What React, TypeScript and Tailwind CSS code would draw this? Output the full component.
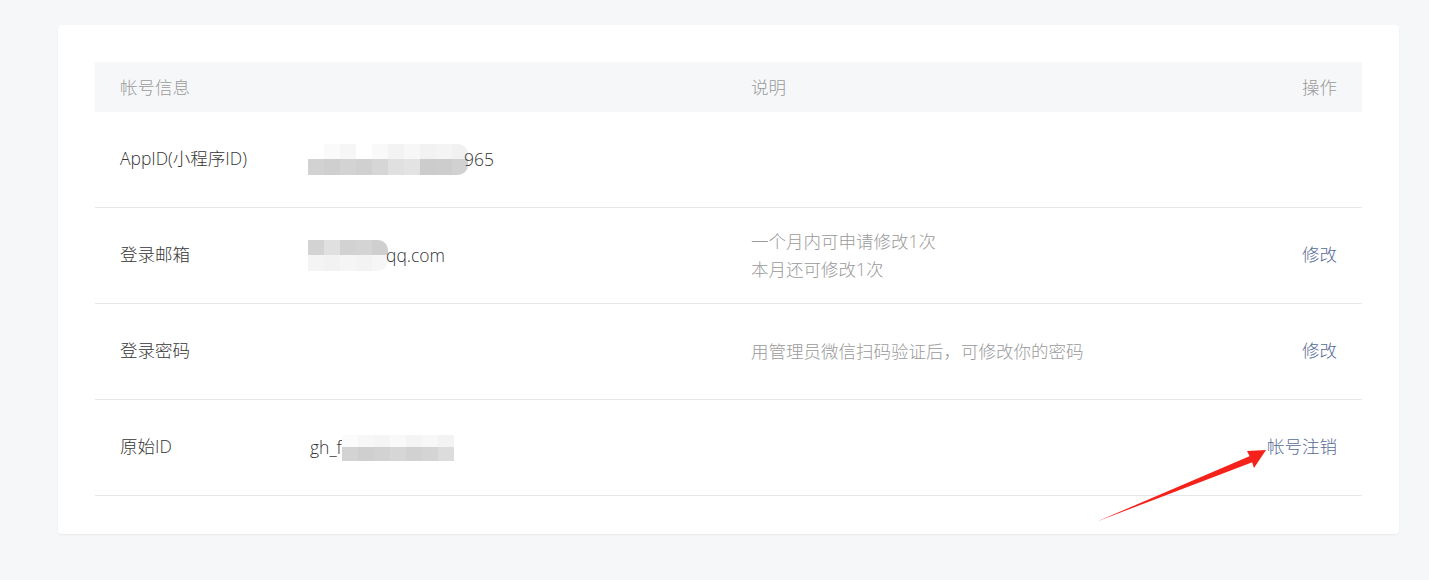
const font = { fontFamily: '"Open Sans", "Noto Sans CJK SC", sans-serif' };

function Mosaic({ top, bottom, w }: { top: string[]; bottom: string[]; w: number }) {
  return (
    <span className="inline-flex flex-col overflow-hidden rounded-r-[10px] align-middle">
      <span className="flex">
        {top.map((c, i) => (
          <span key={i} className="h-[15px]" style={{ width: w, background: c }} />
        ))}
      </span>
      <span className="flex">
        {bottom.map((c, i) => (
          <span key={i} className="h-[16px]" style={{ width: w, background: c }} />
        ))}
      </span>
    </span>
  );
}

type Row = { label: string; value: React.ReactNode; desc?: string[]; action?: string };

const rows: Row[] = [
  {
    label: 'AppID(小程序ID)',
    value: (
      <span className="flex items-center">
        <Mosaic
          w={16}
          top={['#ffffff', '#fafafa', '#f6f6f6', '#ffffff', '#f9f9f9', '#f3f3f3', '#f7f7f7', '#f2f2f2', '#f4f4f4', '#f1f1f1']}
          bottom={['#d2d2d2', '#cfcfcf', '#d3d3d3', '#d0d0d0', '#d6d6d6', '#e0e0e0', '#e3e3e3', '#cccccc', '#cdcdcd', '#d1d1d1']}
        />
        <span className="-ml-[4px]">965</span>
      </span>
    ),
  },
  {
    label: '登录邮箱',
    value: (
      <span className="flex items-center">
        <Mosaic
          w={16}
          top={['#d3d3d3', '#e0e0e0', '#d2d2d2', '#d4d4d4', '#cfcfcf']}
          bottom={['#f4f4f4', '#f2f2f2', '#f5f5f5', '#f3f3f3', '#f6f6f6']}
        />
        <span className="-ml-[2px]">qq.com</span>
      </span>
    ),
    desc: ['一个月内可申请修改1次', '本月还可修改1次'],
    action: '修改',
  },
  {
    label: '登录密码',
    value: null,
    desc: ['用管理员微信扫码验证后，可修改你的密码'],
    action: '修改',
  },
  {
    label: '原始ID',
    value: (
      <span className="flex items-center pl-[2px]">
        <span>gh_f</span>
        <span className="inline-flex flex-col">
          <span className="flex">
            {['#fbfbfb', '#f7f7f7', '#f5f5f5', '#f9f9f9', '#f4f4f4', '#f7f7f7', '#f3f3f3'].map((c, i) => (
              <span key={i} className="h-[12px] w-[16px]" style={{ background: c }} />
            ))}
          </span>
          <span className="flex">
            {['#d3d3d3', '#cfcfcf', '#d2d2d2', '#d6d6d6', '#d1d1d1', '#d4d4d4', '#dcdcdc'].map((c, i) => (
              <span key={i} className="h-[14px] w-[16px]" style={{ background: c }} />
            ))}
          </span>
        </span>
      </span>
    ),
    action: '帐号注销',
  },
];

export default function App() {
  return (
    <div className="relative min-h-[580px] bg-[#f6f7f9] px-[58px] pt-[25px] text-[17.5px] font-light" style={font}>
      <div className="w-[1341px] rounded-[4px] bg-white px-[37px] pt-[37px] pb-[38px] shadow-[0_1px_2px_rgba(0,0,0,0.06)]">
        <div className="grid h-[50px] grid-cols-[213px_443px_1fr_auto] items-center bg-[#f6f7f9] text-[#9a9a9a]">
          <div className="pl-[25px]">帐号信息</div>
          <div />
          <div>说明</div>
          <div className="pr-[25px]">操作</div>
        </div>
        {rows.map((r) => (
          <div
            key={r.label}
            className="grid h-[96px] grid-cols-[213px_443px_1fr_auto] items-center border-b border-[#e7e7eb] text-[#353535]"
          >
            <div className="pl-[25px] pb-[2px]">{r.label}</div>
            <div>{r.value}</div>
            <div className="pb-[2px] leading-[28px] text-[#9a9a9a]">
              {r.desc?.map((d) => (
                <div key={d}>{d}</div>
              ))}
            </div>
            <div className="pb-[2px] pr-[25px] text-right text-[#576b95]">{r.action}</div>
          </div>
        ))}
      </div>
      <svg className="pointer-events-none absolute left-0 top-0" width="1429" height="580">
        <path d="M1097 521.5 L1250 456 L1253 462 Z" fill="#f5221b" />
        <path d="M1266 450 L1247 451 L1251 459 L1254 468 Z" fill="#f5221b" />
      </svg>
    </div>
  );
}
